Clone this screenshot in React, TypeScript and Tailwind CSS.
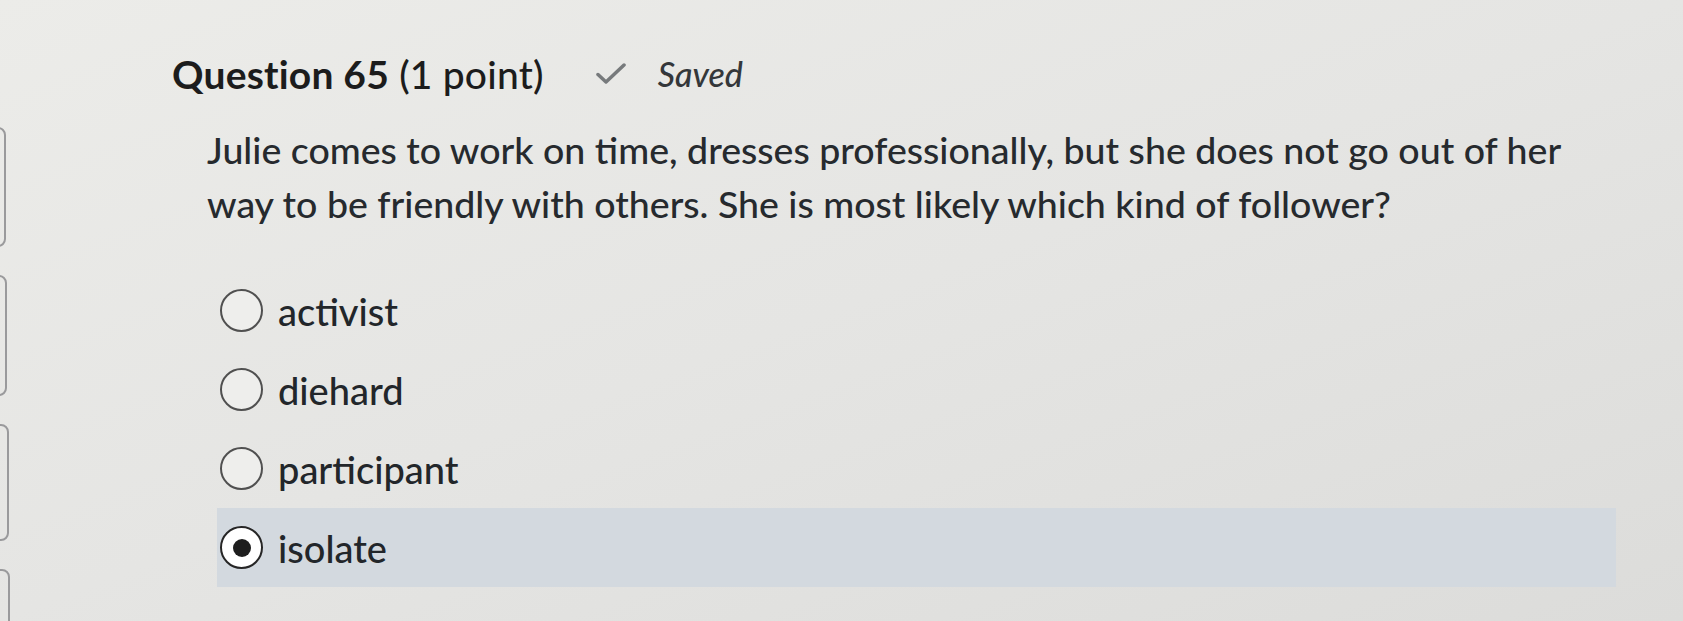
import React from "react";

const options = ["activist", "diehard", "participant", "isolate"];
const selected = "isolate";

function Radio({ checked }: { checked: boolean }) {
  return (
    <span
      className={
        "flex h-[43px] w-[43px] shrink-0 items-center justify-center rounded-full border-[2.5px] " +
        (checked ? "border-[#262626] bg-white" : "border-[#505050] bg-[#eeeeec]")
      }
    >
      {checked && <span className="h-[18px] w-[18px] rounded-full bg-[#1e1e1e]" />}
    </span>
  );
}

export default function App() {
  return (
    <div
      className="flex h-[621px] w-full overflow-hidden bg-gradient-to-br from-[#ecece9] via-[#e5e5e3] to-[#dcdcda] text-[#262a2e]"
      style={{ fontFamily: "Lato, 'Open Sans', sans-serif" }}
    >
      {/* cut-off cards of the side column */}
      <div className="flex w-[8px] shrink-0 flex-col gap-[28px] pt-[127px]">
        <div className="-ml-[40px] h-[120px] w-[46px] shrink-0 rounded-[8px] border-2 border-[#9a9a9c]" />
        <div className="-ml-[40px] h-[121px] w-[47px] shrink-0 rounded-[8px] border-2 border-[#9a9a9c]" />
        <div className="-ml-[40px] h-[117px] w-[49px] shrink-0 rounded-[8px] border-2 border-[#9a9a9c]" />
        <div className="-ml-[40px] h-[120px] w-[50px] shrink-0 rounded-[8px] border-2 border-[#9a9a9c]" />
      </div>

      <main className="flex-1 pl-[164px] pt-[48px]">
        <div className="flex items-center">
          <h1 className="text-[39px] leading-[44px] tracking-[0.2px] text-[#1c1c1c]">
            <span className="font-bold">Question 65</span> <span className="font-medium">(1 point)</span>
          </h1>
          <svg className="ml-[52px]" width="30" height="22" viewBox="0 0 30 22" fill="none">
            <path d="M2 11.5 L10 19 L28 2" stroke="#777a7c" strokeWidth="3.5" strokeLinecap="round" strokeLinejoin="round" />
          </svg>
          <span className="ml-[32px] text-[34px] font-medium italic text-[#34373a]">Saved</span>
        </div>

        <p className="mt-[24px] w-[1460px] pl-[35px] text-[37.5px] font-medium leading-[54px] text-[#262a2e]">
          Julie comes to work on time, dresses professionally, but she does not go out of her way to be friendly
          with others. She is most likely which kind of follower?
        </p>

        <div className="ml-[45px] mt-[40px] w-[1399px]">
          {options.map((o) => {
            const checked = o === selected;
            return (
              <label
                key={o}
                className={
                  "flex h-[79px] items-center gap-[15px] px-[3px] " + (checked ? "bg-[#d3d9df]" : "")
                }
              >
                <Radio checked={checked} />
                <span className="text-[38px] font-medium leading-none text-[#22262a]">{o}</span>
              </label>
            );
          })}
        </div>
      </main>
    </div>
  );
}
